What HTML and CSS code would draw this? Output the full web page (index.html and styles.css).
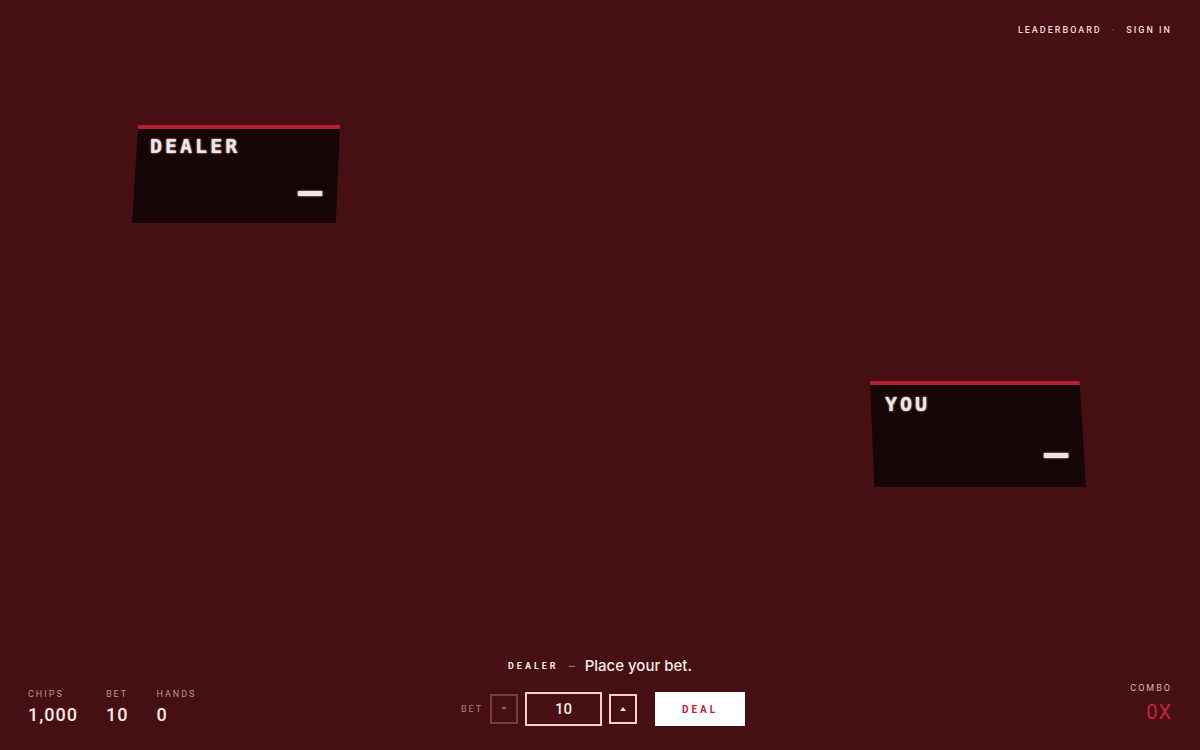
FILE: index.html
```html
<!DOCTYPE html>
<html lang="en">
<head>
<meta charset="utf-8">
<meta name="viewport" content="width=device-width, initial-scale=1">
<title>Blackjack</title>
<link rel="stylesheet" href="styles.css">
</head>
<body>
<div class="game">
  <header class="topbar">
    <nav class="nav">
      <a href="#leaderboard">LEADERBOARD</a>
      <span class="nav-dot">·</span>
      <a href="#signin">SIGN IN</a>
    </nav>
  </header>

  <main class="table">
    <section class="plate plate-dealer">
      <h2 class="plate-name">DEALER</h2>
      <p class="plate-score">—</p>
    </section>
    <section class="plate plate-you">
      <h2 class="plate-name">YOU</h2>
      <p class="plate-score">—</p>
    </section>
  </main>

  <footer class="hud">
    <dl class="stats">
      <div class="stat"><dt>CHIPS</dt><dd>1,000</dd></div>
      <div class="stat"><dt>BET</dt><dd>10</dd></div>
      <div class="stat"><dt>HANDS</dt><dd>0</dd></div>
    </dl>
    <div class="center">
      <p class="message"><span class="speaker">DEALER</span><span class="dash">–</span><span>Place your bet.</span></p>
      <form class="controls">
        <label class="bet-label" for="bet">BET</label>
        <button class="step" type="button" disabled aria-label="Lower bet"><svg width="8" height="6" viewBox="0 0 8 6"><path d="M1 1h6L4 4z"/></svg></button>
        <input class="bet" id="bet" type="text" inputmode="numeric" value="10">
        <button class="step" type="button" aria-label="Raise bet"><svg width="8" height="6" viewBox="0 0 8 6"><path d="M4 1l3 4H1z"/></svg></button>
        <button class="deal" type="submit">DEAL</button>
      </form>
    </div>
    <dl class="stats stats-right">
      <div class="stat combo"><dt>COMBO</dt><dd>0X</dd></div>
    </dl>
  </footer>
</div>
</body>
</html>
```
FILE: styles.css
```css
* { box-sizing: border-box; }

body {
  margin: 0;
  background: #450f14;
  color: #fbe9e2;
  font-family: Roboto, "Liberation Sans", sans-serif;
}

.game {
  min-height: 100vh;
  display: flex;
  flex-direction: column;
}

.topbar {
  display: flex;
  justify-content: flex-end;
  padding: 24px 28px 0;
}

.nav {
  display: flex;
  gap: 10px;
  font-size: 9px;
  font-weight: 500;
  line-height: 12px;
  letter-spacing: 2px;
}

.nav a { color: #f6d9d2; text-decoration: none; }
.nav-dot { color: #a8747a; }

.table {
  position: relative;
  flex: 1;
}

/* Name plates lie in perspective on the table */
.plate {
  position: absolute;
  display: flex;
  flex-direction: column;
  justify-content: space-between;
  background: linear-gradient(#b51f31 4px, #150507 4px);
}

.plate-dealer {
  left: 11%;
  top: 89px;
  width: 208px;
  height: 98px;
  padding: 9px 18px 12px;
  clip-path: polygon(3% 0, 100% 0, 98% 100%, 0 100%);
}

.plate-you {
  right: 114px;
  top: 345px;
  width: 216px;
  height: 106px;
  padding: 11px 18px 14px 15px;
  clip-path: polygon(0 0, 97% 0, 100% 100%, 2% 100%);
}

.plate-name,
.plate-score {
  margin: 0;
  color: #efe6e3;
  font-family: "DejaVu Sans Mono", monospace;
  font-weight: 700;
  text-shadow: 0 0 2px #efe6e3;
}

.plate-name { font-size: 20px; line-height: 24px; letter-spacing: 3px; }
.plate-score { font-size: 40px; line-height: 40px; text-align: right; }

.hud {
  display: grid;
  grid-template-columns: 1fr auto 1fr;
  align-items: end;
  padding: 0 28px 24px;
}

.stats { display: flex; gap: 28px; margin: 0; }
.stats-right { justify-content: flex-end; }

.stat dt {
  color: #c98f92;
  font-size: 9px;
  line-height: 12px;
  letter-spacing: 2px;
}

.stat dd {
  margin: 4px 0 0;
  font-size: 18px;
  font-weight: 500;
  line-height: 22px;
  letter-spacing: 1px;
}

.combo { text-align: right; }
.combo dt { color: #e0b3b1; }

.combo dd {
  color: #c9203a;
  font-size: 20px;
  font-weight: 400;
  line-height: 28px;
}

.message {
  display: flex;
  justify-content: center;
  align-items: center;
  gap: 10px;
  margin: 0 0 16px;
  font-family: Inter, Roboto, sans-serif;
  font-size: 15px;
  font-weight: 500;
  line-height: 20px;
}

.speaker { font-family: Roboto, sans-serif; font-size: 9px; font-weight: 700; letter-spacing: 3px; }
.dash { color: #a8747a; font-size: 12px; }

.controls { display: flex; align-items: center; gap: 7px; padding-left: 6px; }

.bet-label {
  color: #b97b80;
  font-size: 9px;
  letter-spacing: 2px;
}

.step {
  display: grid;
  place-items: center;
  width: 28px;
  height: 30px;
  padding: 0;
  border: 2px solid #f5d3cc;
  border-radius: 0;
  background: transparent;
}

.step svg { fill: #fbe9e2; }
.step:disabled { border-color: #793d42; }
.step:disabled svg { fill: #9b5b60; }

.bet {
  width: 77px;
  height: 34px;
  padding: 0;
  border: 2px solid #f5d3cc;
  border-radius: 0;
  background: transparent;
  color: #fbe9e2;
  font: 500 15px Roboto, sans-serif;
  text-align: center;
}

.deal {
  width: 90px;
  height: 34px;
  margin-left: 11px;
  padding: 0;
  border: 0;
  background: #fff;
  color: #b81f3c;
  font: 700 10px Roboto, sans-serif;
  letter-spacing: 3px;
}
```
